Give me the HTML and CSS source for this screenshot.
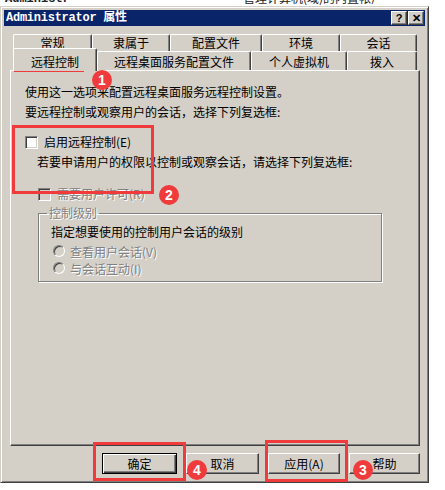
FILE: index.html
```html
<!DOCTYPE html>
<html lang="zh-CN">
<head>
    <meta charset="UTF-8">
    <title>Administrator 属性</title>
    <link rel="stylesheet" href="styles.css">
</head>
<body>
    <div class="backdrop">
        <span class="bd-left">Administr</span>
        <span class="bd-right">管理计算机(域)的内置帐户</span>
    </div>

    <div class="dialog">
        <div class="titlebar">
            <span class="title">Administrator 属性</span>
            <div class="tb-btns">
                <span class="tb-btn">?</span>
                <span class="tb-btn">✕</span>
            </div>
        </div>

        <div class="tabs">
            <div class="tab-row back">
                <div class="tab w79">常规</div>
                <div class="tab w78">隶属于</div>
                <div class="tab w92">配置文件</div>
                <div class="tab w78">环境</div>
                <div class="tab w77">会话</div>
            </div>
            <div class="tab-row front">
                <div class="tab active w84">远程控制</div>
                <div class="tab w154">远程桌面服务配置文件</div>
                <div class="tab w96">个人虚拟机</div>
                <div class="tab w70">拨入</div>
            </div>
        </div>

        <div class="panel">
            <p class="line first">使用这一选项来配置远程桌面服务远程控制设置。</p>
            <p class="line">要远程控制或观察用户的会话，选择下列复选框:</p>

            <label class="check-row enable">
                <span class="checkbox"></span>
                <span>启用远程控制(E)</span>
            </label>
            <p class="line sub">若要申请用户的权限以控制或观察会话，请选择下列复选框:</p>

            <label class="check-row consent disabled">
                <span class="checkbox off"></span>
                <span>需要用户许可(R)</span>
            </label>

            <fieldset class="group">
                <legend class="disabled">控制级别</legend>
                <p class="line">指定想要使用的控制用户会话的级别</p>
                <label class="radio-row disabled first">
                    <span class="radio"></span>
                    <span>查看用户会话(V)</span>
                </label>
                <label class="radio-row disabled">
                    <span class="radio"></span>
                    <span>与会话互动(I)</span>
                </label>
            </fieldset>
        </div>

        <div class="buttons">
            <div class="btn default w75">确定</div>
            <div class="btn w73">取消</div>
            <div class="btn w72">应用(A)</div>
            <div class="btn w71">帮助</div>
        </div>
    </div>

    <!-- annotations -->
    <div class="mark box-a"></div>
    <div class="mark box-b"></div>
    <div class="mark box-c"></div>
    <div class="mark box-d"></div>
    <div class="dot dot-1">1</div>
    <div class="dot dot-2">2</div>
    <div class="dot dot-3">3</div>
    <div class="dot dot-4">4</div>
</body>
</html>
```

FILE: styles.css
```css
* {
    box-sizing: border-box;
}
body {
    margin: 0;
    background: #fff;
    font-family: "Noto Sans CJK SC", "Liberation Sans", sans-serif;
    font-size: 12px;
    color: #000;
    position: relative;
    width: 445px;
    height: 490px;
    overflow: hidden;
}
p {
    margin: 0;
}

.backdrop {
    height: 6px;
    overflow: hidden;
    position: relative;
    line-height: 12px;
    color: #222;
}
.bd-left {
    position: absolute;
    left: 5px;
    top: -7px;
    font-family: "Liberation Mono", monospace;
    font-weight: bold;
}
.bd-right {
    position: absolute;
    left: 243px;
    top: -8px;
}

.dialog {
    width: 429px;
    height: 477px;
    background: #d4d0c8;
    border: 1px solid;
    border-color: #d4d0c8 #404040 #404040 #d4d0c8;
    box-shadow: inset 1px 1px 0 #fff, inset -1px -1px 0 #808080;
    padding: 3px;
}

.titlebar {
    height: 16px;
    background: #0a246a;
    display: flex;
    align-items: center;
    justify-content: space-between;
    padding: 0 1px 0 2px;
}
.title {
    color: #fff;
    font-family: "Liberation Mono", "Noto Sans CJK SC", monospace;
    font-weight: bold;
    font-size: 12px;
    letter-spacing: -0.25px;
    line-height: 16px;
}
.tb-btns {
    display: flex;
    gap: 1px;
}
.tb-btn {
    width: 16px;
    height: 14px;
    background: #d4d0c8;
    border: 1px solid;
    border-color: #fff #404040 #404040 #fff;
    box-shadow: inset -1px -1px 0 #808080;
    font-family: "Liberation Sans", sans-serif;
    font-weight: bold;
    font-size: 11px;
    line-height: 12px;
    text-align: center;
    color: #000;
}

.tabs {
    margin-top: 8px;
    padding-left: 9px;
}
.tab-row {
    display: flex;
    align-items: flex-end;
}
.tab-row.back {
    height: 17px;
}
.tab-row.front {
    height: 19px;
}
.tab {
    background: #d4d0c8;
    border-top: 1px solid #fff;
    border-left: 1px solid #fff;
    border-right: 1px solid #404040;
    box-shadow: inset -1px 0 0 #808080;
    border-radius: 2px 2px 0 0;
    text-align: center;
}
.back .tab {
    height: 17px;
    line-height: 16px;
}
.front .tab {
    height: 19px;
    line-height: 16px;
    padding-top: 2px;
}
.front .tab.active {
    height: 23px;
    margin-bottom: -1px;
    padding-top: 5px;
    position: relative;
    z-index: 1;
}
.w70 { width: 70px; }
.w71 { width: 71px; }
.w72 { width: 72px; }
.w73 { width: 73px; }
.w75 { width: 75px; }
.w77 { width: 77px; }
.w78 { width: 78px; }
.w79 { width: 79px; }
.w84 { width: 84px; }
.w92 { width: 92px; }
.w96 { width: 96px; }
.w154 { width: 154px; }

.panel {
    margin: 0 5px 0 6px;
    height: 376px;
    border: 1px solid;
    border-color: #fff #404040 #404040 #fff;
    box-shadow: inset -1px -1px 0 #808080;
    padding-left: 14px;
}
.line {
    line-height: 16px;
    margin-top: 4px;
}
.line.first {
    margin-top: 13px;
}
.line.sub {
    margin-left: 12px;
}

.check-row {
    display: flex;
    align-items: center;
    gap: 6px;
    height: 16px;
    line-height: 16px;
}
.check-row.enable {
    margin-top: 14px;
}
.check-row.consent {
    margin-top: 16px;
    margin-left: 13px;
}
.checkbox {
    width: 13px;
    height: 13px;
    background: #fff;
    border: 1px solid;
    border-color: #808080 #fff #fff #808080;
    box-shadow: inset 1px 1px 0 #404040, inset -1px -1px 0 #d4d0c8;
}
.checkbox.off {
    background: #d4d0c8;
}

.disabled {
    color: #808080;
    text-shadow: 1px 1px 0 #fff;
}

.group {
    margin: 3px 0 0 13px;
    width: 344px;
    border: 1px solid #808080;
    box-shadow: 1px 1px 0 #fff, inset 1px 1px 0 #fff;
    padding: 3px 0 5px 12px;
}
.group legend {
    padding: 0 2px;
    margin-left: -4px;
    line-height: 16px;
}
.group .line {
    margin-top: 0;
}
.radio-row {
    display: flex;
    align-items: center;
    gap: 5px;
    height: 16px;
    margin-top: 1px;
    margin-left: 2px;
}
.radio-row.first {
    margin-top: 3px;
}
.radio {
    width: 12px;
    height: 12px;
    border-radius: 50%;
    background: #d4d0c8;
    border: 1px solid;
    border-color: #808080 #fff #fff #808080;
    box-shadow: inset 1px 1px 0 #404040;
}

.buttons {
    display: flex;
    gap: 9px;
    margin-top: 7px;
    padding-left: 98px;
}
.btn {
    height: 21px;
    background: #d4d0c8;
    border: 1px solid;
    border-color: #fff #404040 #404040 #fff;
    box-shadow: inset -1px -1px 0 #808080;
    text-align: center;
    line-height: 19px;
}
.btn.default {
    border-color: #000;
    box-shadow: inset 1px 1px 0 #fff, inset -1px -1px 0 #404040, inset -2px -2px 0 #808080;
}

.mark {
    position: absolute;
    border: 3px solid #ef3b3b;
}
.box-a {
    left: 14px;
    top: 49px;
    width: 70px;
    height: 23px;
}
.box-b {
    left: 12px;
    top: 125px;
    width: 142px;
    height: 69px;
}
.box-c {
    left: 265px;
    top: 440px;
    width: 83px;
    height: 42px;
}
.box-d {
    left: 93px;
    top: 442px;
    width: 93px;
    height: 39px;
}
.dot {
    position: absolute;
    width: 20px;
    height: 20px;
    border-radius: 50%;
    background: #ef3b3b;
    color: #fff;
    font-family: "Liberation Sans", sans-serif;
    font-weight: bold;
    font-size: 14px;
    line-height: 20px;
    text-align: center;
}
.dot-1 { left: 92px; top: 70px; }
.dot-2 { left: 159px; top: 185px; }
.dot-3 { left: 353px; top: 460px; }
.dot-4 { left: 187px; top: 460px; }
```
